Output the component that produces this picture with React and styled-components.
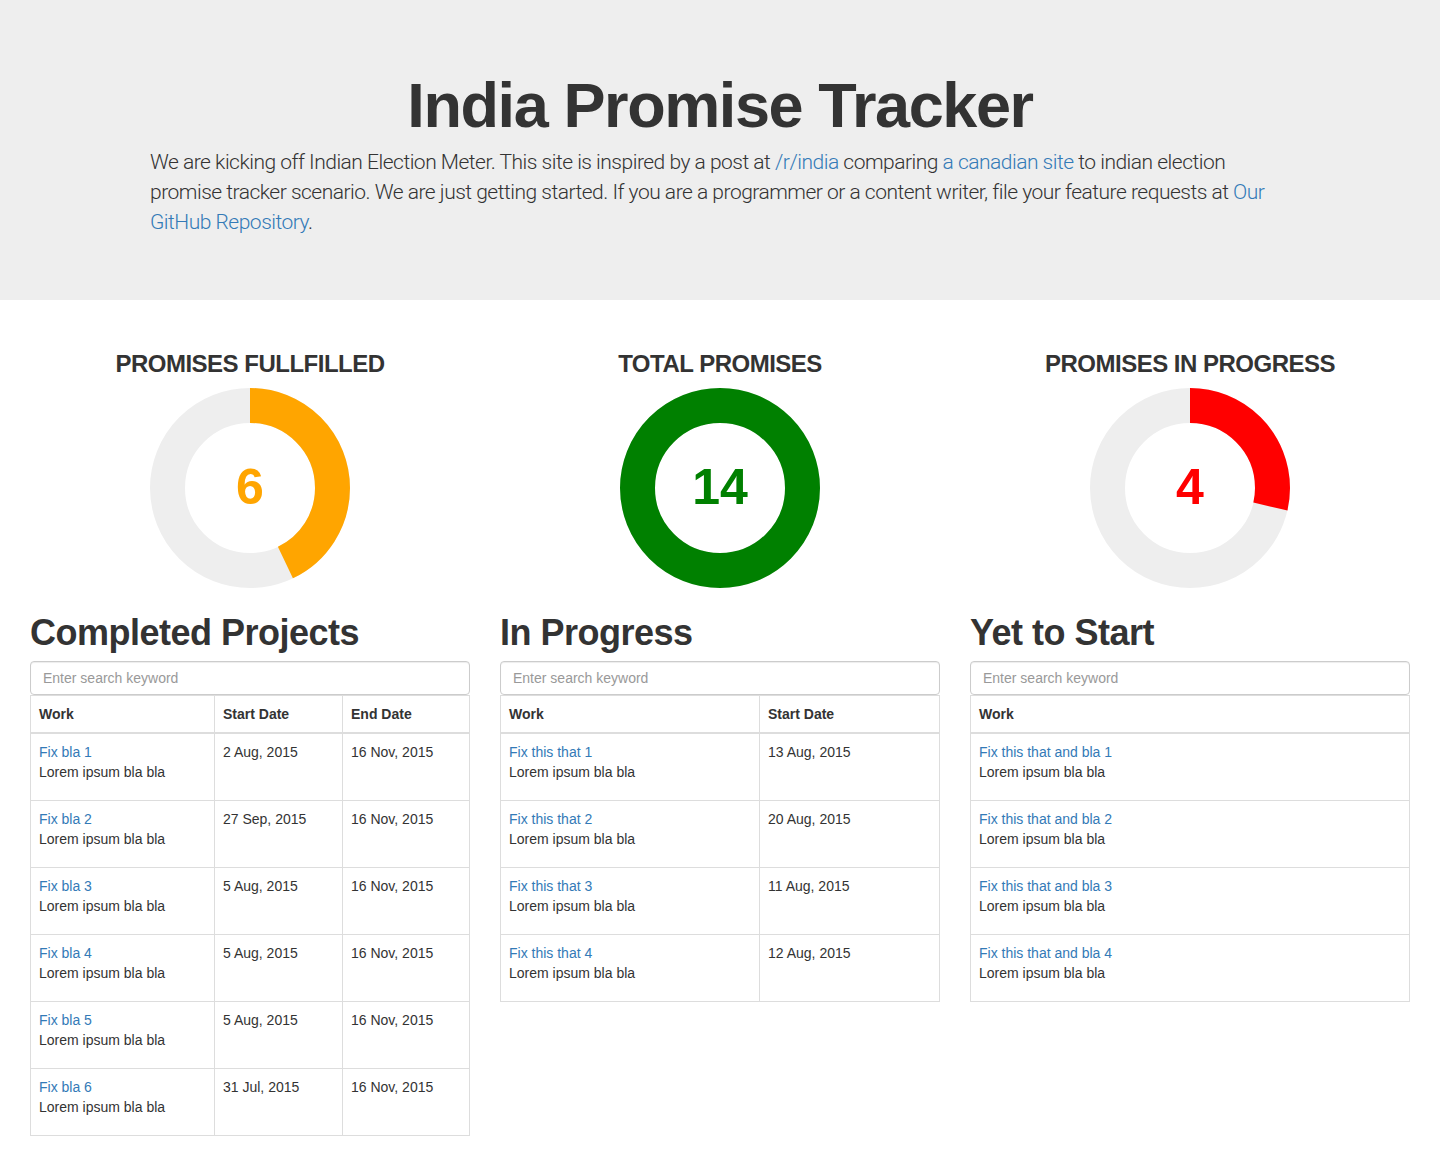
import React from 'react';
import styled, { createGlobalStyle } from 'styled-components';

const GlobalStyle = createGlobalStyle`
  * { box-sizing: border-box; }
  body {
    margin: 0;
    background: #fff;
    color: #333;
    font-family: "Liberation Sans", Arial, Helvetica, sans-serif;
    font-size: 14px;
    line-height: 1.42857143;
  }
  a { color: #337ab7; text-decoration: none; }
`;

const Jumbotron = styled.header`
  background-color: #eee;
  padding: 48px 0 48px;
`;

const JumboInner = styled.div`
  width: 1170px;
  margin: 0 auto;
  padding: 0 15px;
`;

const Title = styled.h1`
  margin: 23px 0 7px;
  text-align: center;
  font-size: 63px;
  line-height: 1.1;
  font-weight: 700;
  letter-spacing: -1.4px;
  color: #333;
`;

const Lead = styled.p`
  margin: 0 0 15px;
  font-family: Roboto, "Liberation Sans", Arial, sans-serif;
  font-size: 21px;
  line-height: 30px;
  font-weight: 300;
  letter-spacing: -0.5px;
  color: #333;
`;

const Main = styled.main`
  display: grid;
  grid-template-columns: repeat(3, 1fr);
  column-gap: 30px;
  padding: 51px 30px 20px;
`;

const Column = styled.section`
  display: flex;
  flex-direction: column;
  min-width: 0;
`;

const StatTitle = styled.h3`
  margin: 0 0 10px;
  text-align: center;
  font-size: 24px;
  line-height: 1.1;
  font-weight: 700;
  letter-spacing: -0.5px;
  text-transform: uppercase;
  color: #333;
`;

const DonutWrap = styled.div`
  position: relative;
  width: 200px;
  height: 200px;
  margin: 0 auto;
`;

const DonutValue = styled.span`
  position: absolute;
  inset: 0;
  display: flex;
  align-items: center;
  justify-content: center;
  font-size: 50px;
  font-weight: 700;
  color: ${(p) => p.$color};
`;

const SectionTitle = styled.h1`
  margin: 25px 0 9px;
  font-size: 36px;
  line-height: 1.1;
  font-weight: 700;
  letter-spacing: -0.5px;
  color: #333;
`;

const Search = styled.input`
  display: block;
  width: 100%;
  height: 34px;
  padding: 6px 12px;
  font-family: inherit;
  font-size: 14px;
  color: #555;
  background: #fff;
  border: 1px solid #ccc;
  border-radius: 4px;
  box-shadow: inset 0 1px 1px rgba(0, 0, 0, .075);
  &::placeholder { color: #999; }
`;

const Table = styled.table`
  width: 100%;
  border-collapse: collapse;
  border: 1px solid #ddd;
`;

const Th = styled.th`
  width: ${(p) => p.$w || 'auto'};
  padding: 8px;
  text-align: left;
  vertical-align: bottom;
  font-weight: 700;
  line-height: 20px;
  border: 1px solid #ddd;
  border-bottom-width: 2px;
`;

const Td = styled.td`
  padding: 8px;
  vertical-align: top;
  line-height: 20px;
  border: 1px solid #ddd;
`;

const WorkText = styled.p`
  margin: 0 0 10px;
`;

function Donut({ value, total, color }) {
  const r = 82.5;
  const c = 2 * Math.PI * r;
  const len = (value / total) * c;
  return (
    <DonutWrap>
      <svg width="200" height="200" viewBox="0 0 200 200">
        <circle cx="100" cy="100" r={r} fill="none" stroke="#eee" strokeWidth="35" />
        <circle
          cx="100"
          cy="100"
          r={r}
          fill="none"
          stroke={color}
          strokeWidth="35"
          strokeDasharray={`${len} ${c}`}
          transform="rotate(-90 100 100)"
        />
      </svg>
      <DonutValue $color={color}>{value}</DonutValue>
    </DonutWrap>
  );
}

const completed = [
  ['Fix bla 1', '2 Aug, 2015', '16 Nov, 2015'],
  ['Fix bla 2', '27 Sep, 2015', '16 Nov, 2015'],
  ['Fix bla 3', '5 Aug, 2015', '16 Nov, 2015'],
  ['Fix bla 4', '5 Aug, 2015', '16 Nov, 2015'],
  ['Fix bla 5', '5 Aug, 2015', '16 Nov, 2015'],
  ['Fix bla 6', '31 Jul, 2015', '16 Nov, 2015'],
];

const inProgress = [
  ['Fix this that 1', '13 Aug, 2015'],
  ['Fix this that 2', '20 Aug, 2015'],
  ['Fix this that 3', '11 Aug, 2015'],
  ['Fix this that 4', '12 Aug, 2015'],
];

const notStarted = [
  ['Fix this that and bla 1'],
  ['Fix this that and bla 2'],
  ['Fix this that and bla 3'],
  ['Fix this that and bla 4'],
];

const columns = [
  {
    stat: 'Promises fullfilled',
    value: 6,
    color: '#ffa500',
    title: 'Completed Projects',
    heads: [['Work', '184px'], ['Start Date', '128px'], ['End Date']],
    rows: completed,
  },
  {
    stat: 'Total promises',
    value: 14,
    color: '#008000',
    title: 'In Progress',
    heads: [['Work', '259px'], ['Start Date']],
    rows: inProgress,
  },
  {
    stat: 'Promises in progress',
    value: 4,
    color: '#ff0000',
    title: 'Yet to Start',
    heads: [['Work']],
    rows: notStarted,
  },
];

export default function App() {
  return (
    <>
      <GlobalStyle />
      <Jumbotron>
        <JumboInner>
          <Title>India Promise Tracker</Title>
          <Lead>
            We are kicking off Indian Election Meter. This site is inspired by a post at{' '}
            <a href="#r">/r/india</a> comparing <a href="#c">a canadian site</a> to indian election
            promise tracker scenario. We are just getting started. If you are a programmer or a
            content writer, file your feature requests at <a href="#g">Our GitHub Repository</a>.
          </Lead>
        </JumboInner>
      </Jumbotron>
      <Main>
        {columns.map((col) => (
          <Column key={col.title}>
            <StatTitle>{col.stat}</StatTitle>
            <Donut value={col.value} total={14} color={col.color} />
            <SectionTitle>{col.title}</SectionTitle>
            <Search type="text" placeholder="Enter search keyword" />
            <Table>
              <thead>
                <tr>
                  {col.heads.map(([label, w]) => (
                    <Th key={label} $w={w}>{label}</Th>
                  ))}
                </tr>
              </thead>
              <tbody>
                {col.rows.map(([work, ...dates]) => (
                  <tr key={work}>
                    <Td>
                      <a href="#w">{work}</a>
                      <WorkText>Lorem ipsum bla bla</WorkText>
                    </Td>
                    {dates.map((d) => (
                      <Td key={d}>{d}</Td>
                    ))}
                  </tr>
                ))}
              </tbody>
            </Table>
          </Column>
        ))}
      </Main>
    </>
  );
}
